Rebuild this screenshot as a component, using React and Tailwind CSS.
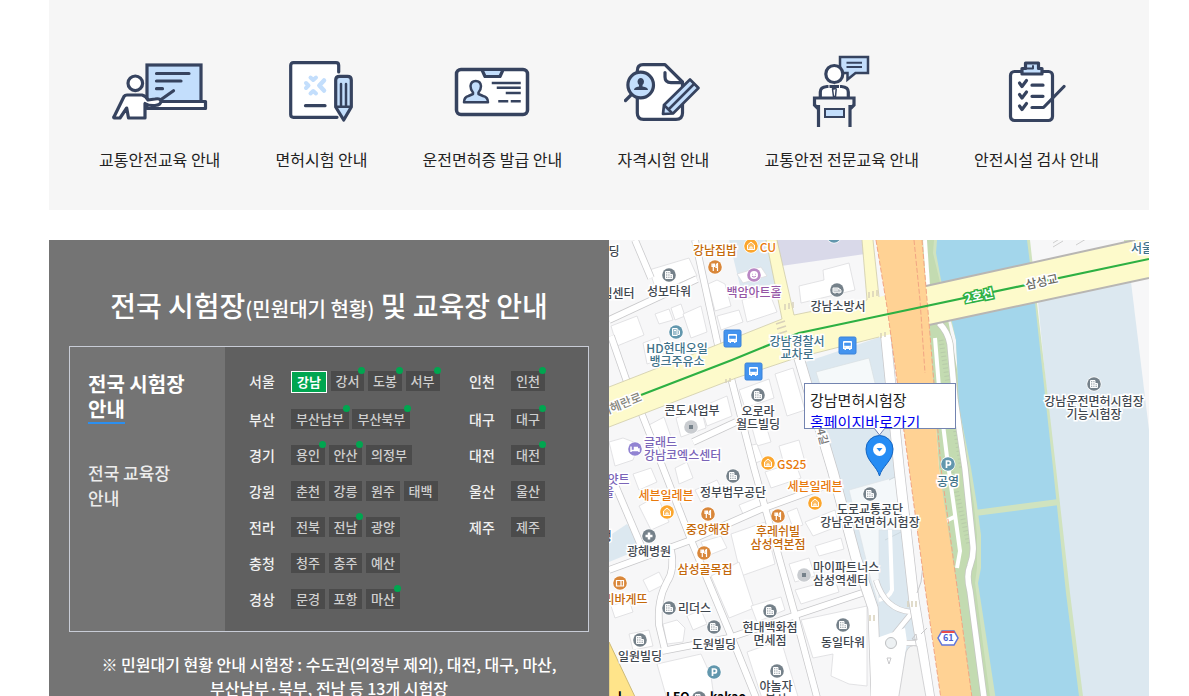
import React from "react";

const NAVY = "#36435f";
const SKY = "#c3defc";

const line = {
  fill: "none",
  stroke: NAVY,
  strokeWidth: 3.2,
  strokeLinecap: "round",
  strokeLinejoin: "round",
};

const TeachIcon = () => (
  <svg width="97" height="72" viewBox="0 0 97 72" {...line}>
    <rect x="36" y="10" width="54" height="37" fill={SKY} strokeLinejoin="miter" />
    <rect x="36" y="46.5" width="58.5" height="7" fill="#fff" />
    <path d="M45.500 18.500H78M45.500 26H70M45.500 33.700H51.500M62.500 35.700L48 46" />
    <circle cx="24.300" cy="28.300" r="7.300" fill="#fff" />
    <path d="M2.700 62.500L13 41.500Q14 40 16 40H31Q35 41 37 45L44 44Q49 43 50 46Q50 50 44 50.500Q38 51 34 48.500V63H17.500L15.700 53L9 63H4Q2.500 63 2.700 62Z" fill="#fff" />
  </svg>
);

const ExamIcon = () => (
  <svg width="67" height="72" viewBox="0 0 67 72" {...line}>
    <path d="M50.700 17V10.500Q50.700 7.700 48 7.700H5.500Q2.700 7.700 2.700 10.500V59.500Q2.700 62.300 5.500 62.300H49" fill="#fff" />
    <g stroke={SKY} strokeWidth="4">
      <path d="M22.500 22.500L25.200 25L28 22.500" fill={SKY} />
      <path d="M22.500 38.500L25.200 36L28 38.500" fill={SKY} />
      <path d="M18 28L20.500 30.500L18 33" fill={SKY} />
      <path d="M36 25.500L31.300 30.500L36 35.500" strokeWidth="4.500" />
    </g>
    <path d="M17.500 50.700H37" />
    <path d="M47.700 25Q47.700 21.300 51.500 21.300H59.500Q63.300 21.300 63.300 25V52L55.700 65L47.700 52Z" fill={SKY} />
    <path d="M53 29V51M58 29V51M49 51.700H62" strokeWidth="2.500" />
  </svg>
);

const LicenseIcon = () => (
  <svg width="77" height="72" viewBox="0 0 77 72" {...line}>
    <rect x="2.500" y="14.500" width="71" height="45" rx="4.500" fill="#fff" strokeWidth="3.500" />
    <path d="M28.500 16L31 21.500H46L48.500 16" fill={SKY} />
    <path d="M39 28H65.500M44 32.700H65.500M53 38H65.500M45.500 46.300H53M58 46.300H65.500" strokeWidth="2.500" strokeLinecap="square" />
    <path d="M10 47.300Q10 42 14.500 41L19 39V37.500Q16.500 34.500 16.500 31Q17 26 21.700 26Q26.500 26 27 31Q27 34.500 24.500 37.500V39L29 41Q34 42 34 47.300Z" fill={SKY} strokeWidth="2.500" />
  </svg>
);

const QualifyIcon = () => (
  <svg width="78" height="72" viewBox="0 0 78 72" {...line}>
    <path d="M13.300 16Q13.300 9.700 19 9.700H41L58.500 27V58Q58.500 64.300 52 64.300H19.500Q13.300 64.300 13.300 58Z" fill="#fff" />
    <path d="M41 17.500V22Q41 27.700 47 27.700H57" />
    <path d="M7.500 39.500L1.500 45.500" />
    <circle cx="16.700" cy="30" r="12.800" fill={SKY} />
    <path d="M10 35Q10 32 15 31.500V30Q13.500 28.500 13.500 26.500Q14 23 16.700 23Q19.500 23 20 26.500Q20 28.500 18.500 30V31.500Q24 32 24 35Z" fill={NAVY} stroke="none" />
    <path d="M39 59L40 50L66 24.500L74.500 33L49 58.500Z" fill={SKY} strokeWidth="2.700" />
    <path d="M70 29L44.500 54.500M40.500 50.500L48 58" strokeWidth="2.500" />
  </svg>
);

const SpeechIcon = () => (
  <svg width="59" height="72" viewBox="0 0 59 72" {...line} strokeLinecap="butt" strokeLinejoin="miter">
    <path d="M28 2H56V18H43.500L35.500 24.500V18H28Z" fill={SKY} strokeWidth="2.500" />
    <path d="M34.500 7.700H50M34.500 12H50" strokeWidth="2" />
    <circle cx="22.300" cy="19" r="8.500" fill="#fff" />
    <path d="M8.300 42V37Q8.300 32 15 31.500H29.500Q36.300 32 36.300 37V42" fill="#fff" />
    <path d="M17 30V41M27.500 30V41" stroke="#fff" strokeWidth="1" />
    <path d="M22.300 31L20.500 34L21.500 41.500H23.500L24.200 34ZM18 30.500L22 34L27 30.500" strokeWidth="1.500" />
    <path d="M2.500 43H42V50.500L38 53V72H6.500V53L2.500 50.500Z" fill="#f6f6f6" stroke="none" />
    <path d="M6.500 72V50M38 72V50M6.500 54L2.500 50V43H42V50L38 54" />
    <rect x="13" y="54" width="19" height="8" fill={SKY} strokeWidth="2" />
  </svg>
);

const InspectIcon = () => (
  <svg width="58" height="72" viewBox="0 0 58 72" {...line}>
    <rect x="2.500" y="16.500" width="42" height="49" rx="4" fill="#fff" />
    <path d="M14 19V13.500H17.500V8H30.500V13.500H34V19Z" fill={SKY} />
    <path d="M18 13.500H25V11" strokeWidth="2" />
    <path d="M11.500 28L14 31.500L18.500 25.500M11.500 39.500L14 43L18.500 37M11.500 51L14 54.500L18.500 48.500" />
    <path d="M24 30.200H35M24 41.300H35M24 52.500H35.500L56 31.500" />
  </svg>
);

const guides = [
  { label: "교통안전교육 안내", Icon: TeachIcon },
  { label: "면허시험 안내", Icon: ExamIcon },
  { label: "운전면허증 발급 안내", Icon: LicenseIcon },
  { label: "자격시험 안내", Icon: QualifyIcon },
  { label: "교통안전 전문교육 안내", Icon: SpeechIcon },
  { label: "안전시설 검사 안내", Icon: InspectIcon },
];

// an asterisk marks the centers that publish their waiting status
const rows = [
  ["서울", ["강남", "강서*", "도봉*", "서부*"], "인천", ["인천*"]],
  ["부산", ["부산남부*", "부산북부*"], "대구", ["대구*"]],
  ["경기", ["용인*", "안산*", "의정부"], "대전", ["대전*"]],
  ["강원", ["춘천", "강릉", "원주", "태백"], "울산", ["울산"]],
  ["전라", ["전북", "전남*", "광양"], "제주", ["제주"]],
  ["충청", ["청주", "충주", "예산"]],
  ["경상", ["문경", "포항", "마산*"]],
];

const Center = ({ name }) => {
  const live = name.endsWith("*");
  const text = name.replace("*", "");
  if (text === "강남") {
    return (
      <button className="border border-white bg-[#00a650] px-[5px] align-top text-[13px] leading-5 font-bold text-white">
        {text}
      </button>
    );
  }
  return (
    <button className="relative bg-[#4b4b4b] px-[5px] align-top text-[13px] leading-5 text-[#cfcfcf]">
      {text}
      {live && <span className="absolute -top-1 -right-px size-[7px] rounded-full bg-[#00a650]" />}
    </button>
  );
};

const Centers = ({ names }) => (
  <div className="leading-5 whitespace-nowrap">
    {names.map((name) => (
      <React.Fragment key={name}>
        <Center name={name} />{" "}
      </React.Fragment>
    ))}
  </div>
);

const GREY = "text-[#3f474f]";
const TEAL = "text-[#3f7289]";
const BROWN = "text-[#c4690a]";
const ORANGE = "text-[#e8790c]";
const PURPLE = "text-[#7a64b8]";
const PINK = "text-[#9556a5]";

const labels = [
  { x: 5, y: 10, t: ["딩"], c: GREY },
  { x: 9, y: 52, t: ["임센터"], c: GREY },
  { x: 60, y: 50, t: ["성보타워"], c: GREY },
  { x: 106, y: 9, t: ["강남집밥"], c: BROWN },
  { x: 159, y: 6, t: ["CU"], c: ORANGE },
  { x: 145, y: 51, t: ["백암아트홀"], c: PINK },
  { x: 229, y: 65, t: ["강남소방서"], c: GREY },
  { x: 68, y: 114, t: ["HD현대오일", "뱅크주유소"], c: TEAL },
  { x: 188, y: 107, t: ["강남경찰서", "교차로"], c: TEAL },
  { x: 83, y: 169, t: ["콘도사업부"], c: GREY },
  { x: 149, y: 177, t: ["오로라", "월드빌딩"], c: GREY },
  { x: 35, y: 208, t: ["글래드", "강남코엑스센터"], c: PURPLE, left: true },
  { x: 168, y: 223, t: ["GS25"], c: ORANGE, left: true },
  { x: 533, y: 7, t: ["서울"], c: TEAL },
  { x: 485, y: 167, t: ["강남운전면허시험장", "기능시험장"], c: GREY },
  { x: 4, y: 238, t: ["하얏트"], c: PURPLE },
  { x: -6, y: 251, t: ["서울"], c: PURPLE },
  { x: 57, y: 254, t: ["세븐일레븐"], c: ORANGE },
  { x: 206, y: 245, t: ["세븐일레븐"], c: ORANGE },
  { x: 124, y: 251, t: ["정부법무공단"], c: GREY },
  { x: 99, y: 288, t: ["중앙해장"], c: BROWN },
  { x: 169, y: 297, t: ["후레쉬빌", "삼성역본점"], c: BROWN },
  { x: -3, y: 295, t: ["행"], c: GREY },
  { x: 40, y: 310, t: ["광혜병원"], c: GREY },
  { x: 96, y: 328, t: ["삼성골목집"], c: BROWN },
  { x: 204, y: 333, t: ["마이파트너스", "삼성역센터"], c: GREY, left: true },
  { x: 11, y: 358, t: ["파리바게뜨"], c: BROWN },
  { x: 69, y: 367, t: ["리더스"], c: GREY, left: true },
  { x: 105, y: 403, t: ["도원빌딩"], c: GREY },
  { x: 31, y: 415, t: ["일원빌딩"], c: GREY },
  { x: 161, y: 393, t: ["현대백화점", "면세점"], c: GREY },
  { x: 234, y: 401, t: ["동일타워"], c: GREY },
  { x: 167, y: 452, t: ["야놀자", "본사"], c: GREY },
  { x: 261, y: 275, t: ["도로교통공단", "강남운전면허시험장"], c: GREY },
  { x: 339, y: 240, t: ["공영"], c: TEAL },
];

const glyphs = {
  building: ["#75818a", <path d="M-3.500 3.500V-3.500H1V-.500H3.500V3.500ZM-1.200 -3.500V3.500M1 -.500V3.500M-3.500 -1.200H1M-3.500 1.200H3.500" fill="#fff" fillOpacity=".35" stroke="#fff" />],
  truck: ["#75818a", <path d="M-4 -2H1.500V-1H3L4 .500V2.300H-4ZM-2.500 3.200H-1.500M1.500 3.200H2.500M-3.500 0H1" fill="#fff" fillOpacity=".5" stroke="#fff" />],
  gas: ["#6297ad", <path d="M-3.500 3.500V-3.500H1.200V3.500ZM-2 -1.500H0M2 -2.500L3.500 -1V2.500H2" fill="#fff" fillOpacity=".4" stroke="#fff" />],
  food: ["#d9873a", <path d="M-3 -3.500V-.500H-.500V-3.500M-1.700 -3.500V4M2.500 4V-3.500Q1 -3 1 .500H2.500" fill="none" stroke="#fff" strokeWidth="1.200" />],
  shop: ["#fba62d", <path d="M-3.500 -1L0 -4L3.500 -1V3.500H-3.500ZM-1 3.500V1H1V3.500" fill="#fff" fillOpacity=".25" stroke="#fff" />],
  smile: ["#b987c4", <><circle r="4" fill="#fff" /><path d="M-1.500 -1.200V-.500M1.500 -1.200V-.500M-2 1.200Q0 3 2 1.200" fill="none" stroke="#b987c4" /></>],
  bed: ["#9183d2", <path d="M-4 -2.500V3M-4 1.500H4M4 3V0H-.500V-1.500H3" fill="none" stroke="#fff" strokeWidth="1.500" />],
  cross: ["#75818a", <path d="M0 -3.500V3.500M-3.500 0H3.500" stroke="#fff" strokeWidth="2.500" />],
  bread: ["#d9873a", <path d="M-3.500 -2.500H3.500V3H-3.500ZM1 -2.500V3" fill="none" stroke="#fff" strokeWidth="1.200" />],
  parking: ["#6297ad", <path d="M-1.500 4V-3H.500Q2.500 -3 2.500 -1T.500 1H-1.500" fill="none" stroke="#fff" strokeWidth="1.700" />],
  dot: ["#c9ccd0", <rect x="-2" y="-2" width="4" height="4" fill="#75818a" />],
};

const pois = [
  ["building", 60, 35], ["building", 149, 155], ["building", 485, 144], ["building", 124, 236],
  ["building", 261, 254], ["building", 60, 368], ["building", 105, 387], ["building", 31, 400],
  ["building", 161, 371], ["building", 234, 385], ["building", 168, 431], ["building", 90, 458],
  ["truck", 228, 50], ["gas", 67, 92], ["gas", 225, -4],
  ["food", 106, 27], ["food", 99, 274], ["food", 169, 276], ["food", 95, 313],
  ["shop", 142, 6], ["shop", 159, 223], ["shop", 58, 272], ["shop", 206, 263],
  ["smile", 145, 35], ["bed", 26, 209], ["cross", 40, 296], ["bread", 11, 343],
  ["parking", 339, 224], ["parking", 105, 432], ["dot", 82, 187], ["dot", 195, 335],
];

const stops = [[123, 98], [238, 105], [144, 131]];

const buildings = [
  "M40 30L80 18L88 36L48 52Z", "M2 86L28 76L35 95L8 106Z", "M34 103L50 97L55 118L38 124Z",
  "M46 74L60 69L64 80L50 84Z", "M62 68L72 64L76 76L66 80Z", "M74 74L92 66L98 92L82 98Z",
  "M99 44L108 40L116 44L122 66L106 71Z", "M108 76L130 70L134 82L112 90Z", "M133 60L160 52L168 72L138 82Z",
  "M128 34L152 27L158 36L134 43Z", "M190 46L215 40L214 30L240 23L246 50L192 63Z",
  "M130 150L160 139L165 158L136 168Z", "M166 134L184 128L196 170L178 176Z", "M67 178L92 168L97 188L72 197Z",
  "M40 185L55 177L62 197L47 205Z", "M92 167L118 156L123 176L98 186Z", "M142 184L156 182L162 202L148 206Z",
  "M170 206L190 200L196 222L176 228Z", "M138 206L148 204L154 220L144 224Z", "M0 202L14 198L30 204L24 220L6 226Z",
  "M66 228L78 222L84 238L70 244Z", "M24 234L42 228L48 242L30 250Z", "M86 250L108 240L114 252L92 262Z",
  "M30 266L48 256L60 282L42 290Z", "M156 232L186 222L192 238L162 248Z", "M130 265L150 257L154 268L134 274Z",
  "M122 294L156 282L166 324L132 336Z", "M102 336L130 322L145 368L120 378Z", "M92 302L112 296L118 308L98 316Z",
  "M178 272L188 268L194 285L184 288Z", "M196 282L226 270L230 286L204 296Z", "M206 306L232 298L235 309L210 316Z",
  "M180 324L200 318L206 336L186 342Z", "M186 350L226 339L230 352L192 364Z", "M34 340L50 332L56 344L40 352Z",
  "M2 366L20 360L24 372L6 378Z", "M54 384L68 380L76 388L74 402L58 404Z", "M20 394L40 390L44 406L24 410Z",
  "M48 424L92 414L102 436L108 480H64Z", "M142 366L172 357L176 370L148 382Z",
  "M192 380L258 366V446L240 444L222 436L224 414L204 418Z", "M138 412L172 400L196 480H160Z", "M78 376L92 370L98 384L84 390Z",
];

const streets = [
  "M86 0L110 110", "M26 0L42 38", "M0 80L88 39", "M2 96L18 142", "M121 134L145 228L157 271L185 371L214 480",
  "M32 172L54 228L82 300L120 391L156 480", "M4 240L33 308", "M84 202L127 182", "M0 330L82 300L150 270L227 242",
  "M62 310Q66 330 58 342Q48 360 50 385L56 410", "M53 411L120 398L187 375L253 353",
];

const CityMap = () => (
  <svg className="absolute inset-0 h-full w-full" viewBox="0 0 540 480" preserveAspectRatio="xMinYMin slice">
    <rect width="540" height="480" fill="#f7f7f8" />
    <path d="M120 0H158L166 44L132 50Z" fill="#dce8f0" />
    <path d="M167 0H254L256 14L172 26Z" fill="#d9d9e9" />
    <path d="M0 296L18 284L34 308L0 322Z" fill="#dce8f0" />
    <path d="M197 122L274 96L290 228L306 361L314 420H262L264 368L240 290Z" fill="#dce8f0" />
    <path d="M207 132L260 118L272 168L222 180Z" fill="#f5f9fa" stroke="#d8dfe3" strokeWidth=".7" />
    <path d="M240 250L290 236L296 290L270 290V366L262 340Z" fill="#f4f8fa" stroke="#dde3e6" strokeWidth=".7" />
    <path d="M280 240L296 232M276 300L292 292" stroke="#ccd8df" strokeWidth="1" />

    <g fill="#fff" stroke="#dcdcde" strokeWidth=".8">
      {buildings.map((d) => <path key={d} d={d} />)}
    </g>

    <g fill="none" strokeLinejoin="round">
      <g stroke="#c9c9cb" strokeWidth="7.500">{streets.map((d) => <path key={d} d={d} />)}</g>
      <g stroke="#fff" strokeWidth="6">{streets.map((d) => <path key={d} d={d} />)}</g>
      <path d="M190 118L224 232L247 318L264 368L268 480" stroke="#c9c9cb" strokeWidth="11" />
      <path d="M190 118L224 232L247 318L264 368L268 480" stroke="#fff" strokeWidth="9.500" />
      <path d="M281 290L283 350Q280 358 270 360" stroke="#fff" strokeWidth="4" />
      <path d="M267 340Q276 370 302 372M302 374L284 396M284 403H312" stroke="#c9c9cb" strokeWidth="6" />
      <path d="M267 340Q276 370 302 372M302 374L284 396M284 403H312" stroke="#fff" strokeWidth="4.500" />
      <path d="M276 88L290 228L305 361L314 415L324 480" stroke="#c9c9cb" strokeWidth="11" />
      <path d="M276 88L290 228L305 361L314 415L324 480" stroke="#fff" strokeWidth="9.500" />
    </g>
    <path d="M314 325L312 342L308 353M318 388L312 394" stroke="#c9c9cb" fill="none" />
    <path d="M262 400L296 388L298 402L286 480H262Z" fill="#fff" />
    <path d="M286 480L297 412Q300 404 308 406L321 480Z" fill="#f4f4f4" stroke="#c9c9cb" strokeWidth=".8" />
    <circle cx="282" cy="403" r="5.500" fill="#edf1f3" stroke="#bdbfc1" />
    <path d="M278 418H282L280 424ZM303 399L308 400L307 394Z" fill="none" stroke="#c9c9cb" />
    <path d="M0 402L37 480H0Z" fill="#ffe48a" stroke="#cdbb7a" strokeWidth="1" />

    {/* river banks */}
    <path d="M313 0H328L327 13L350 140L372 300L369 343L387 480H362L330 228Z" fill="#c3dbb1" />
    <path d="M429 62L522 42L540 190V480H473L457 353Z" fill="#dce8f0" />
    <path d="M325 0L324 13L331 42L347 100L350 167L365 265L368 295V328L366 343L384 480H477L461 353L447 228L428 63L421 0Z" fill="#d0e3bf" />
    <path d="M328 0L327 13L332 40L343 82L347 100L350 167L362 228L368 265L372 295V328L369 343L390 480H473L457 353L444 228L426 63L418 0Z" fill="#a3d6eb" />
    <path d="M366 273L450 262" stroke="#d0e3bf" strokeWidth="6" />
    <path d="M515 0H530L515 4Z" fill="#d0e3bf" />
    <path d="M444 7L454 1M467 5L477 -1M444 3L452 -2" stroke="#cfcfcf" />
    <path d="M332 100L353 230M343 232L360 305" stroke="#aebfa4" strokeWidth="5" strokeDasharray="1 3" opacity=".5" />
    <g fill="none">
      <path d="M330 83Q339 92 341 104L346 160L356 228L364 305Q365 315 361 326Q357 335 361 351L378 480" stroke="#c5c8c2" strokeWidth="7" />
      <path d="M330 83Q339 92 341 104L346 160L356 228L364 305Q365 315 361 326Q357 335 361 351L378 480" stroke="#fff" strokeWidth="5.500" />
      <path d="M326 98L331 160L338 217L344 260L351 311L348 328M337 281L345 277" stroke="#fff" strokeWidth="4" />
      <path d="M316 0L319 46" stroke="#fff" strokeWidth="4" />
    </g>

    {/* main avenue */}
    <path d="M0 147L110 104L173 79L157 0H168L185 75L258 60L253 0H264L270 57L317 46L526 0H540V38L320 85L270 97L187 118L127 138L0 187Z" fill="#fdfacb" />
    <path d="M0 147L110 104L173 79L157 0M168 0L185 75L258 60L253 0M264 0L270 57M0 187L127 138L187 118L270 97" fill="none" stroke="#cfcba9" strokeWidth=".8" />
    <path d="M317 46L526 0M320 85L540 38" stroke="#b8b6b3" strokeWidth="2" />
    <path d="M167 84L176 81M168 89L177 86M169 94L178 91M176 64V70M180 63V69M184 62V68M117 139V143M121 138V142M260 52V58M264 51V57M268 50V56M272 93V98M276 92V97M299 361V367M303 361V367M307 361V367M261 375V381M265 375V381" stroke="#d8d1ba" strokeWidth="1.500" />
    <path d="M267 0H313L320 83L330 228L350 361L366 480H335L315 340L300 228L278 67Z" fill="#ffd294" />
    <path d="M267 0L278 67L300 228L315 340L335 480M313 0L320 83L332 228L350 361L366 480M305 0L311 60L316 133" fill="none" stroke="#f2a583" strokeDasharray="5 2" />
    <path d="M32 155L123 120L167 102L190 93L270 76L540 19" fill="none" stroke="#2db043" strokeWidth="2.200" />

    {pois.map(([kind, x, y]) => (
      <g key={`${kind}-${x}-${y}`} transform={`translate(${x} ${y})`}>
        <circle r="7.500" fill="#fff" />
        <circle r="6.800" fill={glyphs[kind][0]} />
        {glyphs[kind][1]}
      </g>
    ))}
    {stops.map(([x, y]) => (
      <g key={x} transform={`translate(${x} ${y})`}>
        <rect x="-8" y="-8" width="17" height="17" rx="1.500" fill="#4494ef" stroke="#3a82d8" />
        <path d="M-4 -3Q-4 -4 -3 -4H4Q5 -4 5 -3V4H3.500V5H2V4H-1V5H-2.500V4H-4Z" fill="#fff" />
        <path d="M-2.500 -2H3.500V.500H-2.500ZM-2.500 2.200H-1.500M2.500 2.200H3.500" fill="#4494ef" stroke="#4494ef" strokeWidth=".6" />
      </g>
    ))}
    <path d="M333 391H345L349 398L345 405H333L329 398Z" fill="#fff" stroke="#5f76dc" strokeWidth="1.500" />
    <path d="M333 391H345L346 393H332Z" fill="#e84c4c" />
    {/* selected place */}
    <path d="M270.500 236C268 226 257 221 257 209A13.500 13.500 0 0 1 284 209C284 221 273 226 270.500 236Z" fill="#258cf4" stroke="#1464c0" />
    <circle cx="270.500" cy="209.500" r="6.500" fill="#fff" />
    <path d="M267.500 208H273.500L270.500 211.500Z" fill="#258cf4" />
  </svg>
);

const halo = "[-webkit-text-stroke:3px_white] [paint-order:stroke_fill]";

export default function App() {
  return (
    <div className="h-screen overflow-hidden bg-white pr-10 pl-[49px] font-['Noto_Sans_CJK_KR','Noto_Sans',sans-serif] font-medium">
      <nav className="flex justify-between bg-[#f6f6f6] px-[50px] pt-[55px] pb-[39px]">
        {guides.map(({ label, Icon }) => (
          <a key={label} href="#" className="flex flex-col items-center gap-5 text-base leading-6 font-normal whitespace-nowrap text-[#222]">
            <Icon />
            {label}
          </a>
        ))}
      </nav>

      <section className="mt-[30px] flex h-[480px]">
        <div className="w-[560px] shrink-0 bg-[#747474] px-5 pt-[45px] text-white">
          <h2 className="text-center text-[28px] leading-10">
            전국 시험장<span className="text-xl">(민원대기 현황)</span> 및 교육장 안내
          </h2>

          <div className="mt-[21px] flex border border-[#c8ccd6]">
            <div className="flex w-[155px] shrink-0 flex-col items-start pt-6 pl-[18px] text-left leading-[25px]">
              <button className="text-left text-xl leading-[25px] font-bold">
                전국 시험장
                <br />
                <span className="inline-block border-b-2 border-[#2b8ff0] pb-px">안내</span>
              </button>
              <button className="mt-9 text-left text-[17px] leading-[25px] text-[#ececec]">
                전국 교육장
                <br />
                안내
              </button>
            </div>

            <div className="flex flex-1 flex-col gap-4 bg-[#606060] pt-6 pb-[22px] pl-6">
              {rows.map(([region, names, region2, names2]) => (
                <div key={region} className="grid grid-cols-[42px_178px_42px_1fr]">
                  <strong className="text-sm leading-5 font-medium text-[#f0f0f0]">{region}</strong>
                  <Centers names={names} />
                  {region2 && (
                    <>
                      <strong className="text-sm leading-5 font-medium text-[#f0f0f0]">{region2}</strong>
                      <Centers names={names2} />
                    </>
                  )}
                </div>
              ))}
            </div>
          </div>

          <p className="mt-5 text-center text-base leading-6 break-keep">
            ※ 민원대기 현황 안내 시험장 : 수도권(의정부 제외), 대전, 대구, 마산,
            <br />
            부산남부·북부, 전남 등 13개 시험장
          </p>
        </div>

        <div className="relative flex-1 overflow-hidden">
          <CityMap />
          {labels.map(({ x, y, t, c, left }) => (
            <div
              key={`${x}-${y}`}
              className={`absolute -translate-y-1/2 text-xs leading-[13px] whitespace-nowrap ${halo} ${c} ${left ? "" : "-translate-x-1/2 text-center"}`}
              style={{ left: x, top: y }}
            >
              {t.map((s) => (
                <div key={s}>{s}</div>
              ))}
            </div>
          ))}
          <div className={`absolute top-[157px] -left-[11px] -rotate-22 text-xs leading-[13px] text-[#85847a] ${halo}`}>테헤란로</div>
          <div className="absolute top-[48px] left-[355px] -rotate-12 text-xs leading-[13px] font-bold text-white [-webkit-text-stroke:3px_#2db043] [paint-order:stroke_fill]">2호선</div>
          <div className={`absolute top-[34px] left-[416px] -rotate-12 text-xs leading-[13px] text-[#6a6a62] ${halo}`}>삼성교</div>
          <div className={`absolute top-[184px] left-[198px] rotate-75 text-[11px] leading-[13px] whitespace-nowrap text-[#777] ${halo}`}>114길</div>
          <div className="absolute top-[392px] left-[334px] text-[9px] leading-3 font-bold text-[#4a62d2]">61</div>

          <div className="absolute top-[450px] left-[9px] text-xs leading-3 font-bold text-black">l</div>
          <div className="absolute top-[450px] left-[57px] text-xs leading-3 font-bold text-black">LEO</div>
          <div className="absolute top-[450px] left-[101px] text-xs leading-3 font-bold text-black">kakao</div>

          <div className="absolute top-[143px] left-[195px] h-[46px] w-[152px] overflow-hidden border border-[#7384b0] bg-white px-[5px] pt-[5px] text-[15px] leading-[22px] font-normal text-[#222]">
            <div>강남면허시험장</div>
            <a href="#" className="text-[#0000ee]">홈페이지바로가기</a>
          </div>
          <svg className="absolute top-[188px] left-[264px]" width="13" height="8">
            <path d="M1 0L6.500 7L12 0" fill="#fff" stroke="#7384b0" />
          </svg>
        </div>
      </section>
    </div>
  );
}
